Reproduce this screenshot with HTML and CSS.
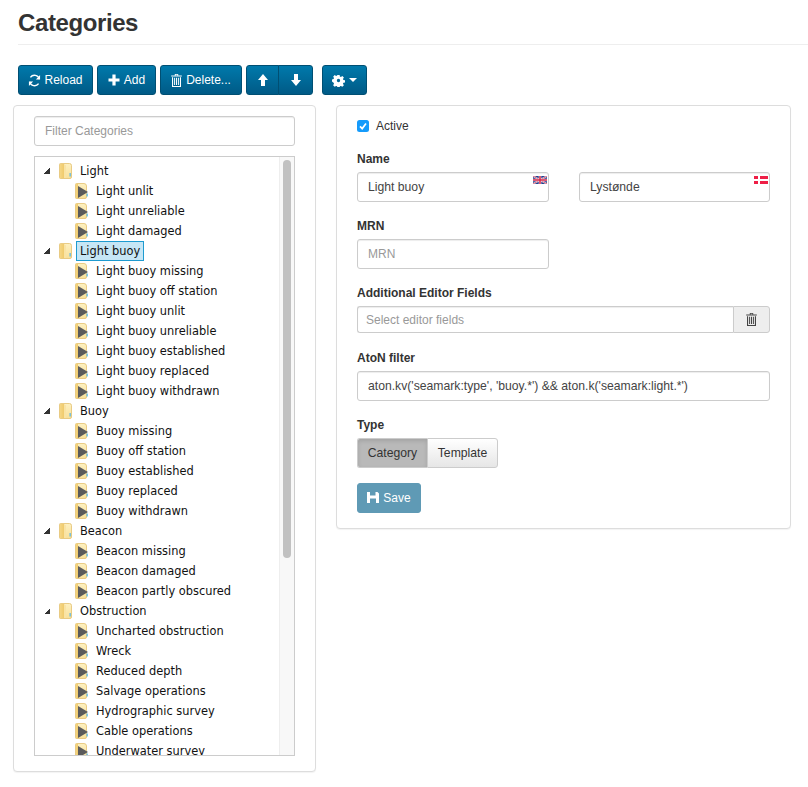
FILE: index.html
```html
<!DOCTYPE html>
<html lang="en">
<head>
<meta charset="utf-8">
<title>Categories</title>
<link rel="stylesheet" href="styles.css">
</head>
<body>
<svg class="sprite" aria-hidden="true">
  <defs>
    <linearGradient id="g-folder" x1="0" y1="0" x2="0" y2="1">
      <stop offset="0" stop-color="#fdf0c0"/>
      <stop offset="1" stop-color="#f8e09a"/>
    </linearGradient>
    <linearGradient id="g-flap" x1="0" y1="0" x2="1" y2="0">
      <stop offset="0" stop-color="#f5d684"/>
      <stop offset="1" stop-color="#efca6c"/>
    </linearGradient>
  </defs>
  <symbol id="i-folder" viewBox="0 0 13 16">
    <path d="M.5 1.500 Q.5 .5 1.500 .5 L10.500 .5 Q12.500 .5 12.500 2.500 L12.500 14 Q12.500 15.500 11 15.500 L1.500 15.500 Q.5 15.500 .5 14.500Z" fill="url(#g-folder)" stroke="#e3c06e" stroke-width=".8"/>
    <path d="M1 1 L5 1 L5 15 L1.500 15 Q1 15 1 14Z" fill="url(#g-flap)"/>
    <path d="M5 1 L7 2.500 L7 15 L5 15Z" fill="#f9e3a4"/>
    <path d="M10.500 10 h1.300 v3.500 h-1.300Z" fill="#5ab8e4"/>
  </symbol>
  <symbol id="i-leaf" viewBox="0 0 13 16">
    <path d="M.5 1.500 Q.5 .5 1.500 .5 L9 .5 Q11.500 .5 11.500 3 L11.500 14 Q11.500 15.500 10 15.500 L1.500 15.500 Q.5 15.500 .5 14.500Z" fill="url(#g-folder)" stroke="#e3c06e" stroke-width=".8"/>
    <path d="M1 1 L3 1 L3 15 L1.500 15 Q1 15 1 14Z" fill="url(#g-flap)"/>
    <path d="M3 3 L13 9 L3 15Z" fill="#5b5b5b"/>
    <path d="M11.500 10.500 h1.300 v3 h-1.300Z" fill="#5ab8e4"/>
  </symbol>
  <symbol id="i-trash" viewBox="0 0 11 13">
    <path fill="currentColor" d="M3.800 0h3.400v1.400h3.600v1.100H.2V1.400h3.600zM4.600.7v.7h1.800V.7zM1 3.300h1.100v8.700h6.800V3.300H10V13H1zM3.100 3.800h1v7.300h-1zM5 3.800h1v7.300H5zM6.900 3.800h1v7.300h-1z"/>
  </symbol>
</svg>

<main class="page">
  <header class="page-head"><h1>Categories</h1></header>

  <nav class="toolbar">
    <button class="btn" type="button">
      <svg class="ico" viewBox="0 0 14 14"><path d="M12.200 5.600A5.400 5.400 0 0 0 2.600 3.600M1.800 8.400a5.400 5.400 0 0 0 9.600 2" fill="none" stroke="currentColor" stroke-width="1.500"/><path d="M13 1.200v4.700H8.500zM1 12.800V8.100h4.500z" fill="currentColor"/></svg>Reload
    </button>
    <button class="btn" type="button">
      <svg class="ico ico-plus" viewBox="0 0 12 12"><path d="M4.400 .5h3.200v3.900h3.900v3.200H7.600v3.900H4.400V7.600H.5V4.400h3.900z" fill="currentColor"/></svg>Add
    </button>
    <button class="btn" type="button"><svg class="ico-trash"><use href="#i-trash"/></svg>Delete...</button>
    <div class="btn-pair">
      <button class="btn btn-arrow" type="button" aria-label="Up"><svg class="ico-arrow" viewBox="0 0 10 12"><path d="M5 0l5 6H7v6H3V6H0z" fill="currentColor"/></svg></button>
      <button class="btn btn-arrow" type="button" aria-label="Down"><svg class="ico-arrow" viewBox="0 0 10 12"><path d="M5 12L0 6h3V0h4v6h3z" fill="currentColor"/></svg></button>
    </div>
    <button class="btn btn-cog" type="button" aria-label="Options">
      <svg class="ico-cog" viewBox="0 0 14 14"><path fill-rule="evenodd" fill="currentColor" d="M5.800 1h2.400l.3 1.700 1.100.5 1.500-1 1.700 1.700-1 1.500.5 1.100 1.700.3v2.400l-1.700.3-.5 1.100 1 1.500-1.700 1.700-1.500-1-1.100.5-.3 1.700H5.800l-.3-1.700-1.100-.5-1.500 1-1.700-1.700 1-1.500-.5-1.100L0 8.200V5.800l1.700-.3.500-1.100-1-1.500 1.700-1.700 1.500 1 1.100-.5zM7 5.200a1.800 1.800 0 1 0 0 3.600 1.800 1.800 0 0 0 0-3.600z"/></svg>
      <span class="caret"></span>
    </button>
  </nav>

  <div class="columns">
    <section class="panel panel-tree">
      <input class="field filter" type="text" placeholder="Filter Categories">
      <div class="tree-box">
        <ul class="tree">
          <li class="node"><span class="arrow"></span><svg class="folder"><use href="#i-folder"/></svg><span class="name">Light</span></li>
          <li class="leaf"><svg class="doc"><use href="#i-leaf"/></svg><span class="name">Light unlit</span></li>
          <li class="leaf"><svg class="doc"><use href="#i-leaf"/></svg><span class="name">Light unreliable</span></li>
          <li class="leaf"><svg class="doc"><use href="#i-leaf"/></svg><span class="name">Light damaged</span></li>
          <li class="node"><span class="arrow"></span><svg class="folder"><use href="#i-folder"/></svg><span class="name selected">Light buoy</span></li>
          <li class="leaf"><svg class="doc"><use href="#i-leaf"/></svg><span class="name">Light buoy missing</span></li>
          <li class="leaf"><svg class="doc"><use href="#i-leaf"/></svg><span class="name">Light buoy off station</span></li>
          <li class="leaf"><svg class="doc"><use href="#i-leaf"/></svg><span class="name">Light buoy unlit</span></li>
          <li class="leaf"><svg class="doc"><use href="#i-leaf"/></svg><span class="name">Light buoy unreliable</span></li>
          <li class="leaf"><svg class="doc"><use href="#i-leaf"/></svg><span class="name">Light buoy established</span></li>
          <li class="leaf"><svg class="doc"><use href="#i-leaf"/></svg><span class="name">Light buoy replaced</span></li>
          <li class="leaf"><svg class="doc"><use href="#i-leaf"/></svg><span class="name">Light buoy withdrawn</span></li>
          <li class="node"><span class="arrow"></span><svg class="folder"><use href="#i-folder"/></svg><span class="name">Buoy</span></li>
          <li class="leaf"><svg class="doc"><use href="#i-leaf"/></svg><span class="name">Buoy missing</span></li>
          <li class="leaf"><svg class="doc"><use href="#i-leaf"/></svg><span class="name">Buoy off station</span></li>
          <li class="leaf"><svg class="doc"><use href="#i-leaf"/></svg><span class="name">Buoy established</span></li>
          <li class="leaf"><svg class="doc"><use href="#i-leaf"/></svg><span class="name">Buoy replaced</span></li>
          <li class="leaf"><svg class="doc"><use href="#i-leaf"/></svg><span class="name">Buoy withdrawn</span></li>
          <li class="node"><span class="arrow"></span><svg class="folder"><use href="#i-folder"/></svg><span class="name">Beacon</span></li>
          <li class="leaf"><svg class="doc"><use href="#i-leaf"/></svg><span class="name">Beacon missing</span></li>
          <li class="leaf"><svg class="doc"><use href="#i-leaf"/></svg><span class="name">Beacon damaged</span></li>
          <li class="leaf"><svg class="doc"><use href="#i-leaf"/></svg><span class="name">Beacon partly obscured</span></li>
          <li class="node"><span class="arrow"></span><svg class="folder"><use href="#i-folder"/></svg><span class="name">Obstruction</span></li>
          <li class="leaf"><svg class="doc"><use href="#i-leaf"/></svg><span class="name">Uncharted obstruction</span></li>
          <li class="leaf"><svg class="doc"><use href="#i-leaf"/></svg><span class="name">Wreck</span></li>
          <li class="leaf"><svg class="doc"><use href="#i-leaf"/></svg><span class="name">Reduced depth</span></li>
          <li class="leaf"><svg class="doc"><use href="#i-leaf"/></svg><span class="name">Salvage operations</span></li>
          <li class="leaf"><svg class="doc"><use href="#i-leaf"/></svg><span class="name">Hydrographic survey</span></li>
          <li class="leaf"><svg class="doc"><use href="#i-leaf"/></svg><span class="name">Cable operations</span></li>
          <li class="leaf"><svg class="doc"><use href="#i-leaf"/></svg><span class="name">Underwater survey</span></li>
        </ul>
        <div class="scrollbar"><div class="thumb"></div></div>
      </div>
    </section>

    <section class="panel panel-form">
      <div class="active-row">
        <svg class="check" viewBox="0 0 12 12"><rect width="12" height="12" rx="2.500" fill="#159bfb"/><path d="M3 6.300l2.200 2.300L9 3.500" fill="none" stroke="#fff" stroke-width="1.700"/></svg>
        <span>Active</span>
      </div>

      <div class="group group-name">
        <div class="label">Name</div>
        <div class="name-row">
          <div class="flag-field">
            <input class="field" type="text" value="Light buoy">
            <svg class="flag" viewBox="0 0 14 8">
              <rect width="14" height="8" fill="#223f8f"/>
              <path d="M0 0L14 8M14 0L0 8" stroke="#e8e8f0" stroke-width="1.600"/>
              <path d="M0 0L14 8M14 0L0 8" stroke="#d8284a" stroke-width=".7"/>
              <path d="M7 0v8M0 4h14" stroke="#e8e8f0" stroke-width="2.600"/>
              <path d="M7 0v8M0 4h14" stroke="#d8284a" stroke-width="1.500"/>
            </svg>
          </div>
          <div class="flag-field">
            <input class="field" type="text" value="Lystønde">
            <svg class="flag" viewBox="0 0 14 8">
              <rect width="14" height="8" fill="#ee1f47"/>
              <path d="M5 0v8M0 4h14" stroke="#fff" stroke-width="2"/>
            </svg>
          </div>
        </div>
      </div>

      <div class="group group-mrn">
        <div class="label">MRN</div>
        <input class="field mrn" type="text" placeholder="MRN">
      </div>

      <div class="group group-editor">
        <div class="label">Additional Editor Fields</div>
        <div class="input-group">
          <input class="field select-field" type="text" placeholder="Select editor fields">
          <button class="addon" type="button" aria-label="Clear"><svg class="addon-ico"><use href="#i-trash"/></svg></button>
        </div>
      </div>

      <div class="group group-filter">
        <div class="label">AtoN filter</div>
        <input class="field" type="text" value="aton.kv('seamark:type', 'buoy.*') &amp;&amp; aton.k('seamark:light.*')">
      </div>

      <div class="group group-type">
        <div class="label">Type</div>
        <div class="segment">
          <button class="seg seg-on" type="button">Category</button>
          <button class="seg" type="button">Template</button>
        </div>
      </div>

      <button class="save" type="button">
        <svg class="ico-save" viewBox="0 0 12 11"><path fill-rule="evenodd" fill="currentColor" d="M0 0h10.500L12 1.500V11H0zM3 0v3.500h5.500V0zM3 6.500V11h6V6.500z"/></svg>Save
      </button>
    </section>
  </div>
</main>
</body>
</html>
```

FILE: styles.css
```css
* { box-sizing: border-box; }

html, body {
  margin: 0;
  padding: 0;
  background: #fff;
  overflow: hidden;
}

body {
  height: 787px;
  font-family: "Liberation Sans", Arial, sans-serif;
  font-size: 12px;
  color: #333;
}

.sprite {
  position: absolute;
  width: 0;
  height: 0;
}

.page { padding-left: 18px; }

.page-head {
  height: 45px;
  padding-top: 10px;
  border-bottom: 1px solid #eee;
}

h1 {
  margin: 0;
  font-size: 24px;
  line-height: 26px;
  font-weight: 700;
  letter-spacing: -.4px;
}

.toolbar {
  display: flex;
  height: 30px;
  margin-top: 20px;
  gap: 4px;
}

.btn {
  display: flex;
  align-items: center;
  justify-content: center;
  height: 30px;
  padding: 0 10px;
  border: 1px solid #004f73;
  border-radius: 3px;
  background: linear-gradient(#0079ab, #005a86);
  color: #fff;
  font: 12px "Liberation Sans", Arial, sans-serif;
}

.toolbar > .btn:nth-child(1) { width: 75px; }
.toolbar > .btn:nth-child(2) { width: 59px; }
.toolbar > .btn:nth-child(3) { width: 82px; }

.ico {
  width: 13px;
  height: 13px;
  margin-right: 3px;
  flex: none;
}

.ico-plus {
  width: 12px;
  height: 12px;
  margin-right: 4px;
}

.ico-trash {
  width: 11px;
  height: 13px;
  margin-right: 4px;
  color: #fff;
  flex: none;
}

.ico-arrow {
  width: 10px;
  height: 12px;
  flex: none;
}

.ico-cog {
  width: 13px;
  height: 13px;
  flex: none;
}

.ico-save {
  width: 12px;
  height: 11px;
  margin: -2px 4px 0 0;
  flex: none;
}

.btn-pair { display: flex; }

.btn-arrow { width: 33px; padding: 0; border-radius: 3px 0 0 3px; }
.btn-arrow + .btn-arrow { width: 35px; margin-left: -1px; border-radius: 0 3px 3px 0; }

.btn-cog { width: 45px; margin-left: 5px; padding: 0; gap: 4px; }

.caret {
  width: 0;
  height: 0;
  border: 4px solid transparent;
  border-top-color: #fff;
  border-bottom: 0;
}

.columns {
  display: grid;
  grid-template-columns: 303px 455px;
  gap: 20px;
  margin: 10px 0 0 -5px;
  align-items: start;
}

.panel {
  border: 1px solid #ddd;
  border-radius: 4px;
  background: #fff;
  box-shadow: 0 1px 1px rgba(0, 0, 0, .05);
}

.panel-tree {
  height: 667px;
  padding: 10px 20px 15px;
}

.field {
  display: block;
  width: 100%;
  height: 30px;
  padding: 0 10px;
  border: 1px solid #ccc;
  border-radius: 3px;
  background: #fff;
  color: #444;
  font: 12.2px "Liberation Sans", Arial, sans-serif;
  box-shadow: inset 0 1px 1px rgba(0, 0, 0, .075);
  outline: 0;
}

.field::placeholder { color: #999; opacity: 1; font-size: 12px; }

.tree-box {
  position: relative;
  height: 600px;
  margin-top: 10px;
  border: 1px solid #ccc;
  overflow: hidden;
}

.tree {
  list-style: none;
  margin: 0;
  padding: 4px 0 0;
  font-family: "DejaVu Sans", Verdana, sans-serif;
  font-size: 11.4px;
  color: #111;
}

.node, .leaf {
  display: flex;
  align-items: center;
  height: 20px;
  white-space: nowrap;
}

.node { padding-left: 9px; }
.leaf { padding-left: 40px; }

.arrow {
  width: 6px;
  height: 6px;
  margin-right: 9px;
  background: linear-gradient(135deg, transparent 50%, #333 50%);
  flex: none;
}

.folder {
  width: 13px;
  height: 16px;
  margin-right: 8px;
  flex: none;
}

.doc {
  width: 13px;
  height: 16px;
  margin-right: 8px;
  flex: none;
}

.node .name { padding: 0 3px; margin-left: -3px; }

.name.selected {
  height: 20px;
  line-height: 18px;
  margin-left: -4px;
  border: 1px solid #1e9bd0;
  background: #c6e6f5;
  padding: 0 3px;
}

.scrollbar {
  position: absolute;
  top: 0;
  right: 0;
  bottom: 0;
  width: 15px;
  background: #f8f8f8;
  border-left: 1px solid #eee;
}

.thumb {
  width: 8px;
  height: 398px;
  margin: 3px 0 0 3px;
  border-radius: 4px;
  background: #c1c1c1;
}

.panel-form {
  height: 424px;
  padding: 14px 20px 0;
}

.active-row {
  display: flex;
  align-items: center;
  height: 12px;
  gap: 7px;
  line-height: 12px;
}

.check { width: 12px; height: 12px; flex: none; }

.label {
  height: 13px;
  margin-bottom: 6px;
  font-weight: 700;
  line-height: 13px;
}

.group-name { margin-top: 21px; }
.group-mrn { margin-top: 18px; }
.group-editor { margin-top: 18px; }
.group-filter { margin-top: 19px; }
.group-type { margin-top: 18px; }

.name-row {
  display: grid;
  grid-template-columns: 192px 191px;
  gap: 30px;
}

.flag-field { position: relative; }

.flag {
  position: absolute;
  top: 4px;
  right: 2px;
  width: 14px;
  height: 8px;
}

.mrn { width: 192px; }

.input-group { display: flex; height: 27px; }

.select-field {
  flex: 1;
  height: 27px;
  padding-left: 8px;
  padding-top: 1px;
  border-right: 0;
  border-radius: 3px 0 0 3px;
}

.addon {
  display: flex;
  align-items: center;
  justify-content: center;
  width: 37px;
  height: 27px;
  padding: 0;
  border: 1px solid #ccc;
  border-radius: 0 3px 3px 0;
  background: #eee;
  color: #444;
}

.addon-ico { width: 11px; height: 13px; }

.segment { display: flex; }

.seg {
  width: 71px;
  height: 30px;
  padding: 0;
  border: 1px solid #ccc;
  border-radius: 0 3px 3px 0;
  background: linear-gradient(#fff, #e6e6e6);
  color: #333;
  font: 12.2px "Liberation Sans", Arial, sans-serif;
}

.seg-on {
  width: 70px;
  border-right: 0;
  border-radius: 3px 0 0 3px;
  background: #b9b9b9;
  box-shadow: inset 0 2px 4px rgba(0, 0, 0, .12);
}

.save {
  display: flex;
  align-items: center;
  justify-content: center;
  width: 64px;
  height: 30px;
  margin-top: 15px;
  padding: 0;
  border: 1px solid #5f9ab5;
  border-radius: 3px;
  background: #5f9ab5;
  color: #fff;
  font: 12px "Liberation Sans", Arial, sans-serif;
}
```
